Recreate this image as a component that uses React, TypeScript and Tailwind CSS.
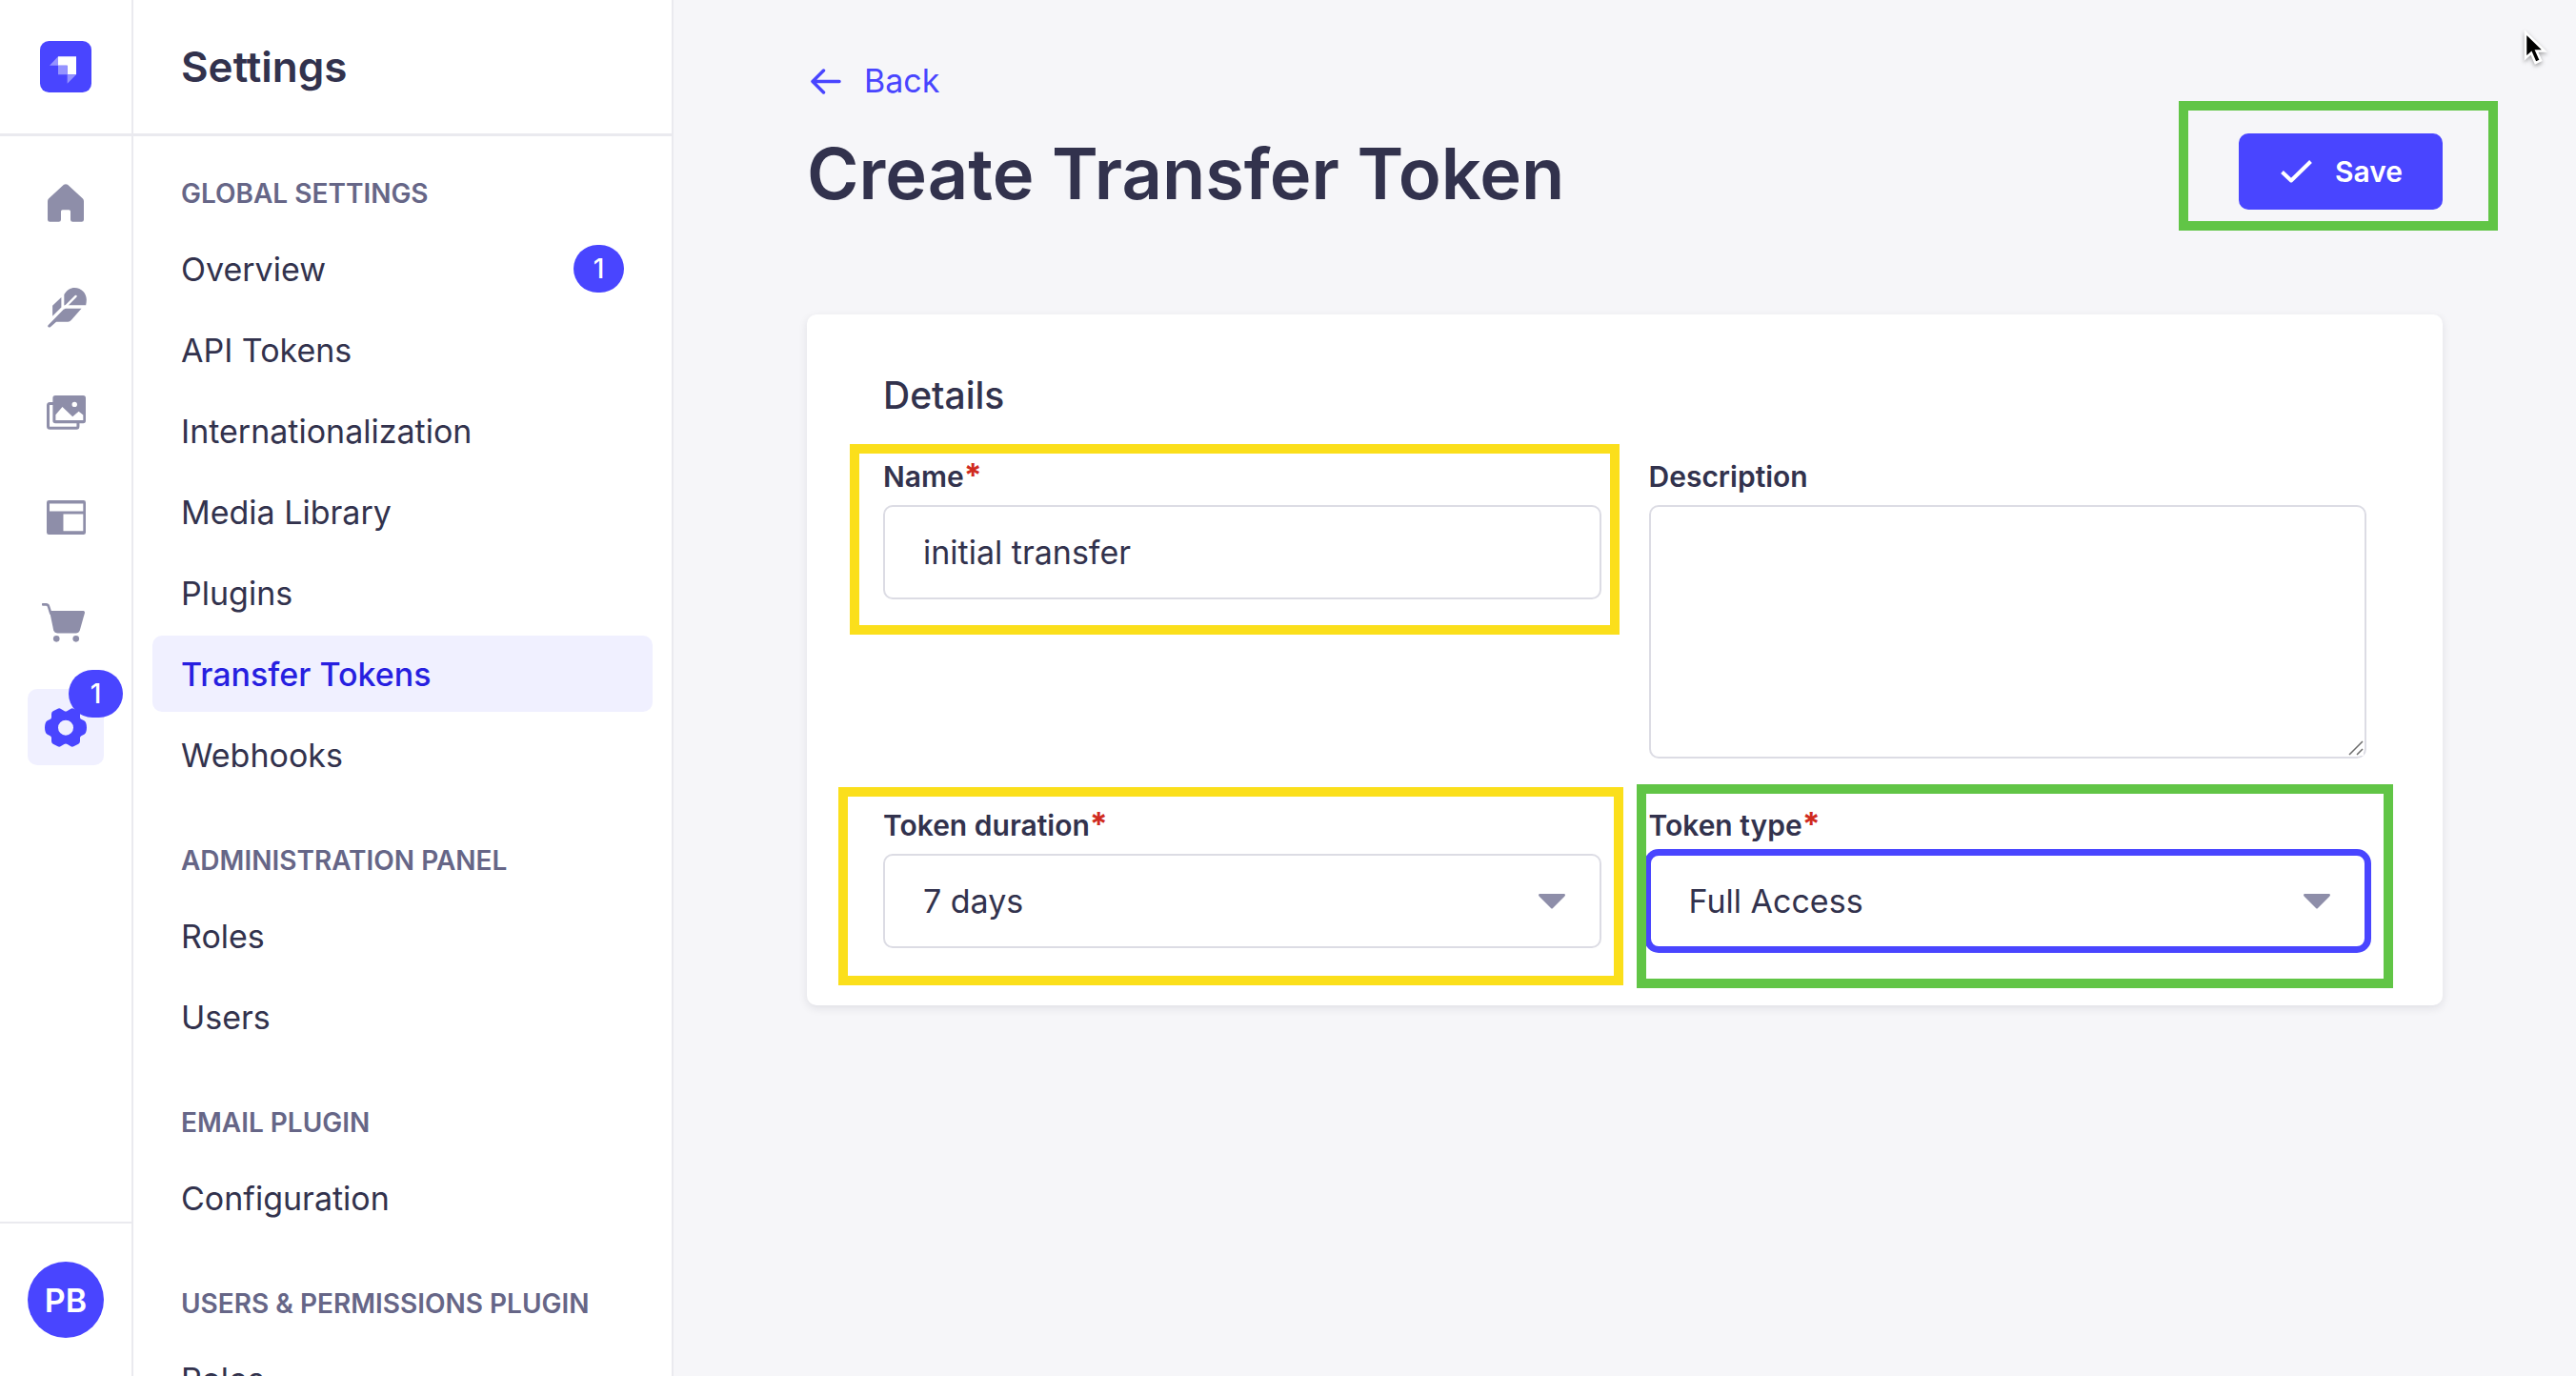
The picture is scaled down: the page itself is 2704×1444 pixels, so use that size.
import type { ReactNode } from 'react';

const HomeIcon = () => (
  <svg className="h-10 w-[38px]" viewBox="0 0 114 119" fill="#8e8ea9" aria-hidden="true">
    <path d="M51 2Q57-2 63 2L111 46Q114 49 114 54V112Q114 119 107 119H79Q72 119 72 112V86Q72 81 67 81H47Q42 81 42 86V112Q42 119 35 119H7Q0 119 0 112V54Q0 49 3 46Z" />
  </svg>
);

const FeatherIcon = () => (
  <svg className="h-[42px] w-11" viewBox="-9 0 132 127" fill="#8e8ea9" aria-hidden="true">
    <path d="M52 56V21C60 8 72 0 85 0C107 0 123 17 123 38C123 44 122 50 121 55H56Z" />
    <path d="M15 57L43 30V62L15 90Z" />
    <path d="M2 118L53 66H107L75 102Q70 108 64 108H27L8 125Q4 127 1 124T2 118Z" />
    <path d="M52 64L89 27" stroke="#fff" strokeWidth="7" strokeLinecap="round" />
  </svg>
);

const GalleryIcon = () => (
  <svg className="h-9 w-[41px]" viewBox="0 0 122 107" aria-hidden="true">
    <path d="M22 25H10Q4.500 25 4.500 31V96Q4.500 102 10 102H93Q98 102 98 96V84" fill="none" stroke="#8e8ea9" strokeWidth="9" />
    <rect x="19" width="103" height="87" rx="8" fill="#8e8ea9" />
    <path d="M28 60L49 36L81 66L100 50L114 61V77H28Z" fill="#fff" />
    <circle cx="87" cy="28" r="8" fill="#fff" />
  </svg>
);

const LayoutIcon = () => (
  <svg className="h-9 w-[41px]" viewBox="0 0 122 107" aria-hidden="true">
    <rect width="122" height="107" rx="7" fill="#8e8ea9" />
    <path d="M9 10H114V34H9ZM52 43H114V96H52Z" fill="#fff" />
  </svg>
);

const CartIcon = () => (
  <svg className="h-[41px] w-[50px]" viewBox="0 0 151 124" fill="#8e8ea9" aria-hidden="true">
    <path d="M3 4H13Q19 4 21 10L28 32" fill="none" stroke="#8e8ea9" strokeWidth="8" strokeLinecap="round" />
    <path d="M24 24H132Q137 25 136 30L120 87Q117 95 109 95H49Q40 95 37 87Z" />
    <circle cx="46" cy="113" r="10" />
    <circle cx="108" cy="113" r="10" />
  </svg>
);

const CogIcon = () => (
  <svg className="h-[41px] w-11" viewBox="0 0 132 123" fill="#4945ff" aria-hidden="true">
    <path
      fillRule="evenodd"
      d="M41 2Q46-1 51 3L61 9Q66 12 71 9L81 3Q86-1 91 2L106 10Q111 13 111 19V29Q111 34 116 36L124 40Q129 43 130 48Q134 61 130 75Q129 80 124 83L116 87Q111 89 111 94V104Q111 110 106 113L91 121Q86 124 81 120L71 114Q66 111 61 114L51 120Q46 124 41 121L26 113Q21 110 21 104V94Q21 89 16 87L8 83Q3 80 2 75Q-2 61 2 48Q3 43 8 40L16 36Q21 34 21 29V19Q21 13 26 10ZM66 38A24 24 0 1 0 66 86A24 24 0 1 0 66 38Z"
    />
  </svg>
);

const Caret = () => (
  <svg
    className="pointer-events-none absolute top-1/2 right-[38px] h-4 w-7 -translate-y-1/2"
    viewBox="0 0 28 16"
    fill="#8e8ea9"
    aria-hidden="true"
  >
    <path d="M1 0H27Q29 1 27 3L15 15Q14 16 13 15L1 3Q-1 1 1 0Z" />
  </svg>
);

const railItems: { label: string; icon: ReactNode; active?: boolean; count?: number }[] = [
  { label: 'Home', icon: <HomeIcon /> },
  { label: 'Content Manager', icon: <FeatherIcon /> },
  { label: 'Media Library', icon: <GalleryIcon /> },
  { label: 'Content-Type Builder', icon: <LayoutIcon /> },
  { label: 'Marketplace', icon: <CartIcon /> },
  { label: 'Settings', icon: <CogIcon />, active: true, count: 1 },
];

const sections: { title: string; links: { label: string; active?: boolean; count?: number }[] }[] = [
  {
    title: 'Global settings',
    links: [
      { label: 'Overview', count: 1 },
      { label: 'API Tokens' },
      { label: 'Internationalization' },
      { label: 'Media Library' },
      { label: 'Plugins' },
      { label: 'Transfer Tokens', active: true },
      { label: 'Webhooks' },
    ],
  },
  { title: 'Administration panel', links: [{ label: 'Roles' }, { label: 'Users' }] },
  { title: 'Email plugin', links: [{ label: 'Configuration' }] },
  { title: 'Users & Permissions plugin', links: [{ label: 'Roles' }] },
];

function Rail() {
  return (
    <nav aria-label="Main" className="flex w-[140px] shrink-0 flex-col border-r-2 border-[#eaeaef] bg-white">
      <div className="flex h-[143px] shrink-0 items-center justify-center border-b-3 border-[#eaeaef]">
        <svg className="h-[54px] w-[54px]" viewBox="0 0 162 162" role="img" aria-label="Strapi">
          <rect width="162" height="162" rx="28" fill="#4945ff" />
          <path d="M57 49H114V106H86V77H57Z" fill="#fff" />
          <path d="M57 49V77H30ZM57 77H86V106H57ZM86 106H114L86 134Z" fill="#9593ff" />
        </svg>
      </div>
      <ul className="flex flex-1 flex-col items-center gap-[30px] pt-[30px]">
        {railItems.map((item) => (
          <li key={item.label} className="relative">
            <a
              href="#"
              aria-label={item.label}
              className={`flex size-20 items-center justify-center rounded-[10px] ${item.active ? 'bg-[#f0f0ff]' : ''}`}
            >
              {item.icon}
            </a>
            {item.count && (
              <span className="absolute -top-5 -right-5 flex h-[50px] w-[57px] items-center justify-center rounded-full bg-[#4945ff] text-[28px] font-medium text-white">
                {item.count}
              </span>
            )}
          </li>
        ))}
      </ul>
      <div className="flex justify-center border-t-2 border-[#eaeaef] py-10">
        <button type="button" className="size-20 rounded-full bg-[#4945ff] text-[34px] font-semibold text-white">
          PB
        </button>
      </div>
    </nav>
  );
}

function SubNav() {
  return (
    <nav aria-label="Settings" className="w-[567px] shrink-0 overflow-hidden border-r-2 border-[#eaeaef] bg-white">
      <div className="flex h-[143px] items-center border-b-3 border-[#eaeaef] px-[50px]">
        <h2 className="text-[44px] font-semibold">Settings</h2>
      </div>
      <div className="flex flex-col gap-[50px] px-5 pt-[39px]">
        {sections.map((section) => (
          <section key={section.title} className="flex flex-col gap-[18px]">
            <h3 className="px-[30px] text-[28px] leading-[42px] font-semibold text-[#666687] uppercase">{section.title}</h3>
            <ul className="flex flex-col gap-[5px]">
              {section.links.map((link) => (
                <li key={link.label}>
                  <a
                    href="#"
                    className={`flex h-20 items-center justify-between rounded-[10px] px-[30px] text-[34px] ${
                      link.active ? 'bg-[#f0f0ff] font-medium text-[#271fe0]' : ''
                    }`}
                  >
                    {link.label}
                    {link.count && (
                      <span className="flex h-[50px] w-[53px] items-center justify-center rounded-full bg-[#4945ff] text-[28px] font-medium text-white">
                        {link.count}
                      </span>
                    )}
                  </a>
                </li>
              ))}
            </ul>
          </section>
        ))}
      </div>
    </nav>
  );
}

function Field({
  id,
  label,
  required,
  highlight,
  children,
}: {
  id: string;
  label: string;
  required?: boolean;
  highlight?: string;
  children: ReactNode;
}) {
  return (
    <div className="relative flex flex-col gap-2.5">
      <label htmlFor={id} className="h-10 text-[30px] leading-10 font-semibold">
        {label}
        {required && <span className="text-[34px] leading-none font-bold text-[#d02b20]">*</span>}
      </label>
      <div className="relative">{children}</div>
      {highlight && <div className={`pointer-events-none absolute border-10 ${highlight}`} />}
    </div>
  );
}

export default function App() {
  return (
    <div className="flex h-screen overflow-hidden bg-[#f6f6f9] font-['Inter',sans-serif] text-[#32324d]">
      <Rail />
      <SubNav />
      <main className="min-w-0 flex-1 px-[140px] pt-[60px]">
        <a href="#" className="inline-flex items-center gap-6 px-1 text-[34px] leading-[50px] text-[#4945ff]">
          <svg className="h-[27px] w-8" viewBox="0 0 32 27" fill="none" stroke="#4945ff" strokeWidth="3.500" strokeLinecap="round" strokeLinejoin="round" aria-hidden="true">
            <path d="M30 13.500H2M13.500 2L2 13.500L13.500 25" />
          </svg>
          Back
        </a>
        <header className="mt-5 flex h-[100px] items-center justify-between">
          <h1 className="pt-1 text-[74px] leading-[94px] font-semibold">Create Transfer Token</h1>
          <div className="relative">
            <button
              type="submit"
              form="token-form"
              className="flex h-20 items-center gap-6 rounded-[10px] bg-[#4945ff] pr-[42px] pl-11 text-[30px] font-semibold text-white"
            >
              <svg className="h-6 w-[33px]" viewBox="0 0 33 24" fill="none" stroke="#fff" strokeWidth="4" strokeLinejoin="round" aria-hidden="true">
                <path d="M1.500 12.500L11 21.500L31.500 1.500" />
              </svg>
              Save
            </button>
            <div className="pointer-events-none absolute -top-[34px] -right-[58px] -bottom-[22px] -left-[63px] border-10 border-[#61c546]" />
          </div>
        </header>
        <form
          id="token-form"
          onSubmit={(event) => event.preventDefault()}
          className="mt-[100px] rounded-[10px] bg-white px-20 py-[60px] shadow-[0_3px_10px_rgba(33,33,52,0.1)]"
        >
          <h2 className="text-[39px] leading-[50px] font-medium">Details</h2>
          <div className="mt-10 grid grid-cols-2 items-start gap-[50px]">
            <Field id="name" label="Name" required highlight="-top-[14px] -right-[19px] -bottom-[37px] -left-[35px] border-[#fbdf1b]">
              <input
                id="name"
                type="text"
                defaultValue="initial transfer"
                className="block h-[99px] w-full rounded-[10px] border-2 border-[#dcdce4] bg-white px-10 text-[34px] outline-none"
              />
            </Field>
            <Field id="description" label="Description">
              <textarea
                id="description"
                className="block h-[266px] w-full resize-y rounded-[10px] border-2 border-[#dcdce4] bg-white px-10 py-5 text-[34px] outline-none"
              />
              <svg
                className="pointer-events-none absolute right-[3px] bottom-[3px] size-4 bg-white"
                viewBox="0 0 16 16"
                stroke="#6b6b6b"
                strokeWidth="1.500"
                aria-hidden="true"
              >
                <path d="M1 15L15 1M9 15L15 9" />
              </svg>
            </Field>
            <Field id="duration" label="Token duration" required highlight="-top-5 -right-[23px] -bottom-[39px] -left-[47px] border-[#fbdf1b]">
              <select
                id="duration"
                defaultValue="7 days"
                className="block h-[99px] w-full appearance-none rounded-[10px] border-2 border-[#dcdce4] bg-white px-10 text-[34px] outline-none"
              >
                <option>7 days</option>
                <option>30 days</option>
                <option>90 days</option>
                <option>Unlimited</option>
              </select>
              <Caret />
            </Field>
            <Field id="type" label="Token type" required highlight="-top-[23px] -right-[28px] -bottom-[42px] -left-[13px] border-[#61c546]">
              <select
                id="type"
                defaultValue="Full Access"
                className="block h-[99px] w-full appearance-none rounded-[10px] border-2 border-[#4945ff] bg-white px-10 text-[34px] shadow-[0_0_0_5px_#4945ff] outline-none"
              >
                <option>Push</option>
                <option>Pull</option>
                <option>Full Access</option>
              </select>
              <Caret />
            </Field>
          </div>
        </form>
      </main>
      <svg
        className="pointer-events-none absolute top-[31px] right-7 h-[42px] w-[30px] drop-shadow-[0_2px_2px_rgba(0,0,0,0.35)]"
        viewBox="0 0 30 42"
        aria-hidden="true"
      >
        <path d="M5 3V30L11 24.500L15.500 35L21 32.500L16.500 22.500H25Z" fill="#000" stroke="#fff" strokeWidth="2.500" />
      </svg>
    </div>
  );
}
